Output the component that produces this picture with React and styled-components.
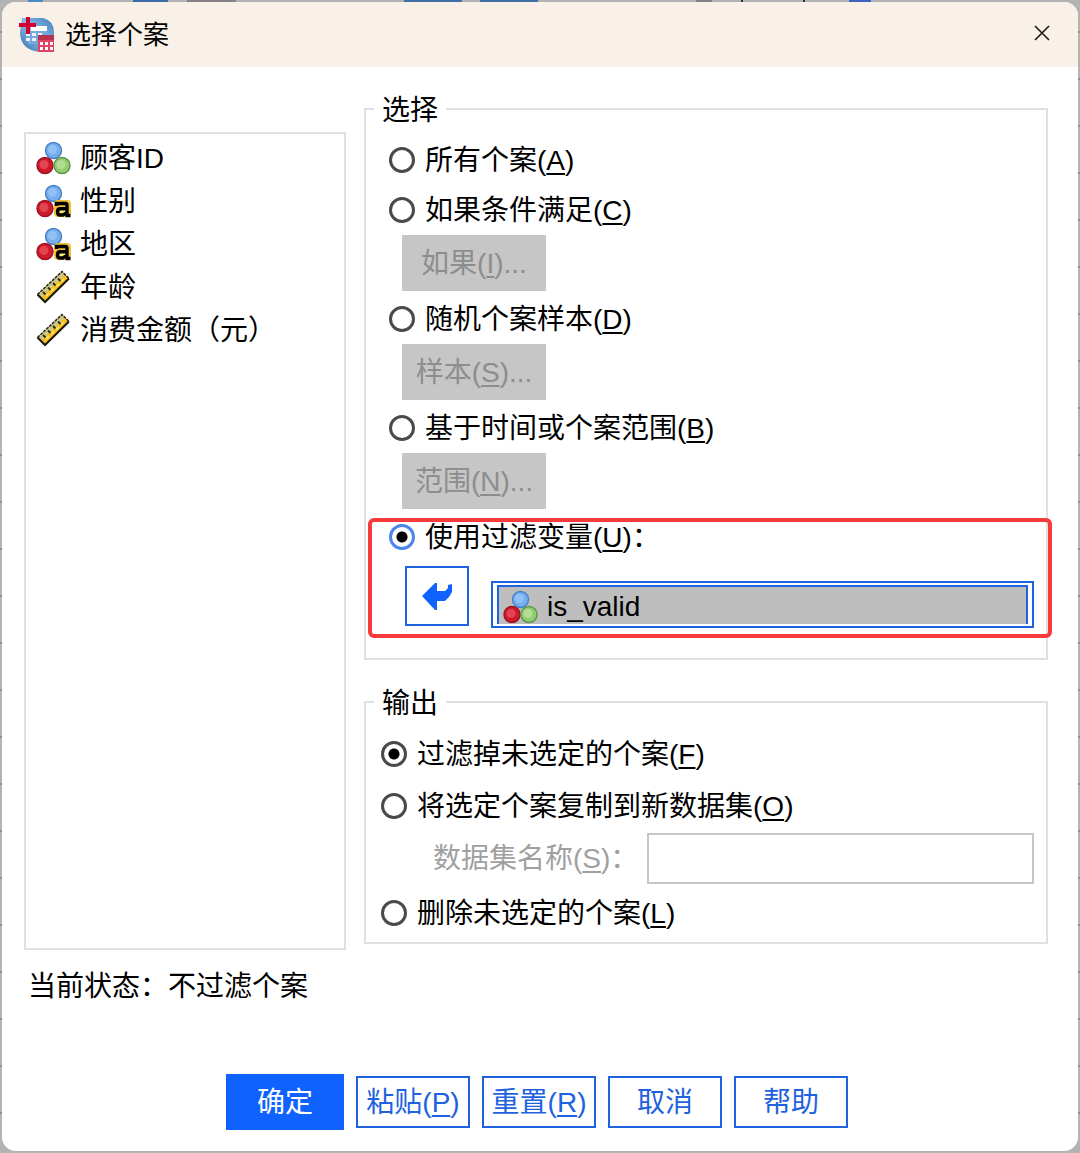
import { useState } from "react"
import styled, { createGlobalStyle } from "styled-components"

const GlobalStyle = createGlobalStyle`
*{
box-sizing:border-box;
}
body{
margin:0;
font-family:"Liberation Sans","Noto Sans CJK SC",sans-serif;
font-size:28px;
color:#000;
}
button,input{
font:inherit;
color:inherit;
}
`
// strip of the data editor that stays visible behind the dialog
const Backdrop = styled.div`
min-height:100vh;
padding:2px;
background:
linear-gradient(#4a8ac4,#4a8ac4) 28px 0/15px 2px no-repeat,
linear-gradient(#3b6aa8,#3b6aa8) 133px 0/35px 2px no-repeat,
linear-gradient(#858083,#858083) 187px 0/49px 2px no-repeat,
linear-gradient(#3f6fa5,#3f6fa5) 404px 0/58px 2px no-repeat,
linear-gradient(#3f6fa5,#3f6fa5) 480px 0/58px 2px no-repeat,
linear-gradient(#858083,#858083) 696px 0/16px 2px no-repeat,
linear-gradient(#223a2c,#223a2c) 741px 0/2px 2px no-repeat,
linear-gradient(#223a2c,#223a2c) 803px 0/2px 2px no-repeat,
linear-gradient(#3d63bd,#3d63bd) 849px 0/22px 2px no-repeat,
repeating-linear-gradient(#b4b3b4 -14px 31px,#8f8f8f 31px 33px);
display:flex;
`
const Dialog = styled.main`
flex:1;
display:flex;
flex-direction:column;
background:#fff;
border-radius:14px;
overflow:hidden;
`
const TitleBar = styled.header`
display:flex;
align-items:center;
height:65px;
padding:0 24px 0 17px;
background:#f9f1e8;
`
const Title = styled.h1`
flex:1;
margin:0 0 0 10px;
font-size:26px;
font-weight:400;
line-height:40px;
`
const CloseButton = styled.button`
display:flex;
padding:4px 4px 8px;
border:0;
background:none;
`
const Content = styled.div`
display:grid;
grid-template-columns:322fr 684fr;
gap:18px;
padding:22px 30px 0 22px;
`
const VariableList = styled.ul`
list-style:none;
margin:43px 0 0;
padding:2px 10px;
border:2px solid #e0e0e0;
`
const Variable = styled.li`
display:flex;
align-items:center;
gap:9px;
height:43px;
white-space:nowrap;
`
const VariableName = styled.span`
padding-bottom:4px;
`
const Groups = styled.div`
display:flex;
flex-direction:column;
gap:22px;
padding-bottom:6px;
`
const Group = styled.fieldset`
margin:0;
min-width:0;
border:2px solid #e0e0e0;
padding:0 12px ${p => p.$bottom}px 8px;
`
const Legend = styled.legend`
padding:4px 8px 0;
line-height:36px;
`
const Options = styled.div`
padding:6px 0 0 ${p => p.$indent}px;
`
const RadioRow = styled.label`
display:flex;
align-items:center;
gap:10px;
height:${p => p.$height}px;
white-space:nowrap;
`
const Radio = styled.input`
appearance:none;
flex:none;
width:26px;
height:26px;
margin:0;
border:3px solid ${p => p.$active ? "#4a86ee" : "#4a4a4a"};
border-radius:50%;
background:#fff;
&:checked{
background:radial-gradient(circle,#000 0 5px,#fff 6px);
}
`
const CaptionText = styled.span`
display:inline-block;
padding-bottom:4px;
`
const Mnemonic = styled.u`
text-decoration-thickness:2px;
text-underline-offset:3px;
text-decoration-skip-ink:none;
`
const SubButton = styled.button`
display:block;
width:144px;
height:56px;
margin:0 0 3px 13px;
padding:0;
border:0;
background:#c6c6c6;
color:#8d8d8d;
`
const FilterVariable = styled.div`
position:relative;
`
// red marker drawn over the group border
const Marker = styled.div`
position:absolute;
inset:6px -18px -10px -21px;
border:4px solid #f73a3b;
border-radius:6px;
pointer-events:none;
`
const FilterRow = styled.div`
display:flex;
gap:22px;
height:62px;
margin:4px 0 0 16px;
`
const MoveButton = styled.button`
display:flex;
align-items:center;
justify-content:center;
width:64px;
height:60px;
padding:0;
border:2px solid #1f62e0;
background:#fff;
`
const FilterField = styled.div`
flex:1;
align-self:flex-end;
height:47px;
padding:2px 4px;
border:2px solid #1f62e0;
`
const FilterValue = styled.div`
display:flex;
align-items:center;
gap:9px;
height:39px;
padding:2px 4px 0;
border:2px solid #1f62e0;
border-bottom:0;
background:#bebebe;
`
const DatasetRow = styled.div`
display:flex;
align-items:center;
justify-content:space-between;
height:52px;
margin:0 0 3px;
padding-left:52px;
`
const DatasetLabel = styled.label`
color:#a0a0a0;
white-space:nowrap;
`
const DatasetInput = styled.input`
flex:0 1 387px;
min-width:0;
height:51px;
padding:0 10px;
border:2px solid #c6c6c6;
background:#fff;
`
const Status = styled.p`
margin:17px 0 0;
padding:0 26px;
line-height:40px;
`
const Footer = styled.footer`
display:flex;
align-items:center;
justify-content:center;
gap:12px;
margin-top:67px;
padding:0 6px 21px 0;
`
const FooterButton = styled.button`
width:${p => p.$primary ? 118 : 114}px;
height:${p => p.$primary ? 56 : 52}px;
padding:0;
border:2px solid ${p => p.$primary ? "#0f62fe" : "#1f62e0"};
background:${p => p.$primary ? "#0f62fe" : "#fff"};
color:${p => p.$primary ? "#fff" : "#1f62e0"};
white-space:nowrap;
`

const Ball = ({ cx, cy, light, main, edge }) => (
    <g>
        <circle cx={cx} cy={cy} r="8" fill={main} stroke={edge} strokeWidth="1.4" />
        <circle cx={cx - 1} cy={cy - 1} r="4.5" fill={light} opacity=".6" />
    </g>
)

const NominalIcon = ({ text }) => (
    <svg width="35" height="34" viewBox="0 0 35 34" aria-hidden="true">
        <Ball cx={17.5} cy={9.5} main="#76aef0" light="#a5cdf8" edge="#4580c4" />
        <Ball cx={9} cy={24.5} main="#cf1a2c" light="#f0606a" edge="#9c1222" />
        {text ? (
            <g>
                <rect x="18" y="16" width="17" height="17" rx="4" fill="#f3c136" />
                <path d="M24 24H30V29H24Z" fill="#f8ee7a" />
                <path d="M20.5 22V19.5H29.5Q31 19.5 31 21.5V31.5M31 24.8H24Q21.5 24.8 21.5 28Q21.5 31 24 31H27L31 28M29.5 31.5H34.5" fill="none" stroke="#000" strokeWidth="3.4" />
            </g>
        ) : (
            <Ball cx={26} cy={24.5} main="#93cc72" light="#c4e8ae" edge="#5c9544" />
        )}
    </svg>
)

const ScaleIcon = () => (
    <svg width="35" height="34" viewBox="0 0 35 34" aria-hidden="true">
        <path d="M1.5 24.5L26 1.5L33 8.5L9 32Z" fill="#f6bf1c" />
        <path d="M2 24L26 1.5L29 4.5L5 27.5Z" fill="#c9c98c" />
        <path d="M1.5 24.5L26 1.5L33 8.5" fill="none" stroke="#2a281a" strokeWidth="1.6" strokeDasharray="3 1" />
        <path d="M33 8.5L9 32L1.5 24.5" fill="none" stroke="#17150c" strokeWidth="2" />
        <path d="M7 22L9.5 24.5M12 17.5L14.5 20M17 13L19.5 15.5M22 8.5L24.5 11" stroke="#2a281a" strokeWidth="1.8" />
        <path d="M10 26L28 9" stroke="#ffe27a" strokeWidth="1.6" strokeDasharray="4 3" />
    </svg>
)

const AppIcon = () => (
    <svg width="36" height="36" viewBox="0 0 36 36" aria-hidden="true">
        <defs>
            <linearGradient id="globe" x1="0" y1="1" x2="1" y2="0">
                <stop offset="0" stopColor="#2f6ba8" />
                <stop offset=".5" stopColor="#8ab8e2" />
                <stop offset="1" stopColor="#3f80bd" />
            </linearGradient>
        </defs>
        <path d="M3 1H24Q35 4 35 15V35H21Q1 33 1 15Z" fill="url(#globe)" />
        <path d="M6 14H27V27H9Z" fill="#78a8dc" />
        <path d="M12 9H28V14H12Z" fill="#fff" />
        <path d="M7 16H11V19H7ZM13 16H17V19H13ZM19 16H23V19H19ZM7 21H11V24H7ZM13 21H17V24H13Z" fill="#eaf3ff" />
        <path d="M19 19H35V35H19Z" fill="#dd4468" />
        <path d="M19 18H35V23H19Z" fill="#b8324f" />
        <path d="M21 25H24V28H21ZM26 25H29V28H26ZM31 25H34V28H31ZM21 30H24V33H21ZM26 30H29V33H26ZM31 30H34V33H31Z" fill="#fff" />
        <path d="M7 0H11V6H17V10H11V17H7V10H0V6H7Z" fill="#d4002f" />
    </svg>
)

const CloseIcon = () => (
    <svg width="16" height="16" viewBox="0 0 16 16" aria-hidden="true">
        <path d="M1 1L15 15M15 1L1 15" stroke="#1a1a1a" strokeWidth="1.6" />
    </svg>
)

const ArrowIcon = () => (
    <svg width="32" height="30" viewBox="0 0 32 30" aria-hidden="true">
        <path d="M1 15L14 2H16V10H24L27 7V4L31 3V11L28 16L24 20H16V29H14Z" fill="#0f62fe" />
    </svg>
)

const variables = [
    { name: "顾客ID", icon: <NominalIcon /> },
    { name: "性别", icon: <NominalIcon text /> },
    { name: "地区", icon: <NominalIcon text /> },
    { name: "年龄", icon: <ScaleIcon /> },
    { name: "消费金额（元）", icon: <ScaleIcon /> },
]

const selectOptions = [
    { text: "所有个案", hotkey: "A" },
    { text: "如果条件满足", hotkey: "C", button: "如果", buttonKey: "I" },
    { text: "随机个案样本", hotkey: "D", button: "样本", buttonKey: "S" },
    { text: "基于时间或个案范围", hotkey: "B", button: "范围", buttonKey: "N" },
]

const Caption = ({ text, hotkey, end }) => (
    <CaptionText>
        {text}{hotkey && <>(<Mnemonic>{hotkey}</Mnemonic>)</>}{end}
    </CaptionText>
)

export default function App() {
    const [select, setSelect] = useState("U")
    const [output, setOutput] = useState("F")

    const outputRow = (text, hotkey) => (
        <RadioRow $height={52}>
            <Radio type="radio" name="output" checked={output === hotkey} onChange={() => setOutput(hotkey)} />
            <Caption text={text} hotkey={hotkey} />
        </RadioRow>
    )

    return (
        <Backdrop>
            <GlobalStyle />
            <Dialog>
                <TitleBar>
                    <AppIcon />
                    <Title>选择个案</Title>
                    <CloseButton aria-label="关闭"><CloseIcon /></CloseButton>
                </TitleBar>
                <Content>
                    <VariableList>
                        {variables.map(v => (
                            <Variable key={v.name}>
                                {v.icon}
                                <VariableName>{v.name}</VariableName>
                            </Variable>
                        ))}
                    </VariableList>
                    <Groups>
                        <Group $bottom={30}>
                            <Legend>选择</Legend>
                            <Options $indent={15}>
                                {selectOptions.map(o => (
                                    <div key={o.hotkey}>
                                        <RadioRow $height={50}>
                                            <Radio type="radio" name="select" checked={select === o.hotkey} onChange={() => setSelect(o.hotkey)} />
                                            <Caption text={o.text} hotkey={o.hotkey} />
                                        </RadioRow>
                                        {o.button && (
                                            <SubButton disabled={select !== o.hotkey}>
                                                <Caption text={o.button} hotkey={o.buttonKey} end="..." />
                                            </SubButton>
                                        )}
                                    </div>
                                ))}
                                <FilterVariable>
                                    <RadioRow $height={50}>
                                        <Radio type="radio" name="select" $active checked={select === "U"} onChange={() => setSelect("U")} />
                                        <Caption text="使用过滤变量" hotkey="U" end="：" />
                                    </RadioRow>
                                    <FilterRow>
                                        <MoveButton aria-label="移动变量"><ArrowIcon /></MoveButton>
                                        <FilterField>
                                            <FilterValue><NominalIcon />is_valid</FilterValue>
                                        </FilterField>
                                    </FilterRow>
                                    <Marker />
                                </FilterVariable>
                            </Options>
                        </Group>
                        <Group $bottom={3}>
                            <Legend>输出</Legend>
                            <Options $indent={7}>
                                {outputRow("过滤掉未选定的个案", "F")}
                                {outputRow("将选定个案复制到新数据集", "O")}
                                <DatasetRow>
                                    <DatasetLabel htmlFor="dataset"><Caption text="数据集名称" hotkey="S" end="：" /></DatasetLabel>
                                    <DatasetInput id="dataset" type="text" disabled={output !== "O"} />
                                </DatasetRow>
                                {outputRow("删除未选定的个案", "L")}
                            </Options>
                        </Group>
                    </Groups>
                </Content>
                <Status>当前状态：不过滤个案</Status>
                <Footer>
                    <FooterButton $primary><Caption text="确定" /></FooterButton>
                    <FooterButton><Caption text="粘贴" hotkey="P" /></FooterButton>
                    <FooterButton><Caption text="重置" hotkey="R" /></FooterButton>
                    <FooterButton><Caption text="取消" /></FooterButton>
                    <FooterButton><Caption text="帮助" /></FooterButton>
                </Footer>
            </Dialog>
        </Backdrop>
    )
}
